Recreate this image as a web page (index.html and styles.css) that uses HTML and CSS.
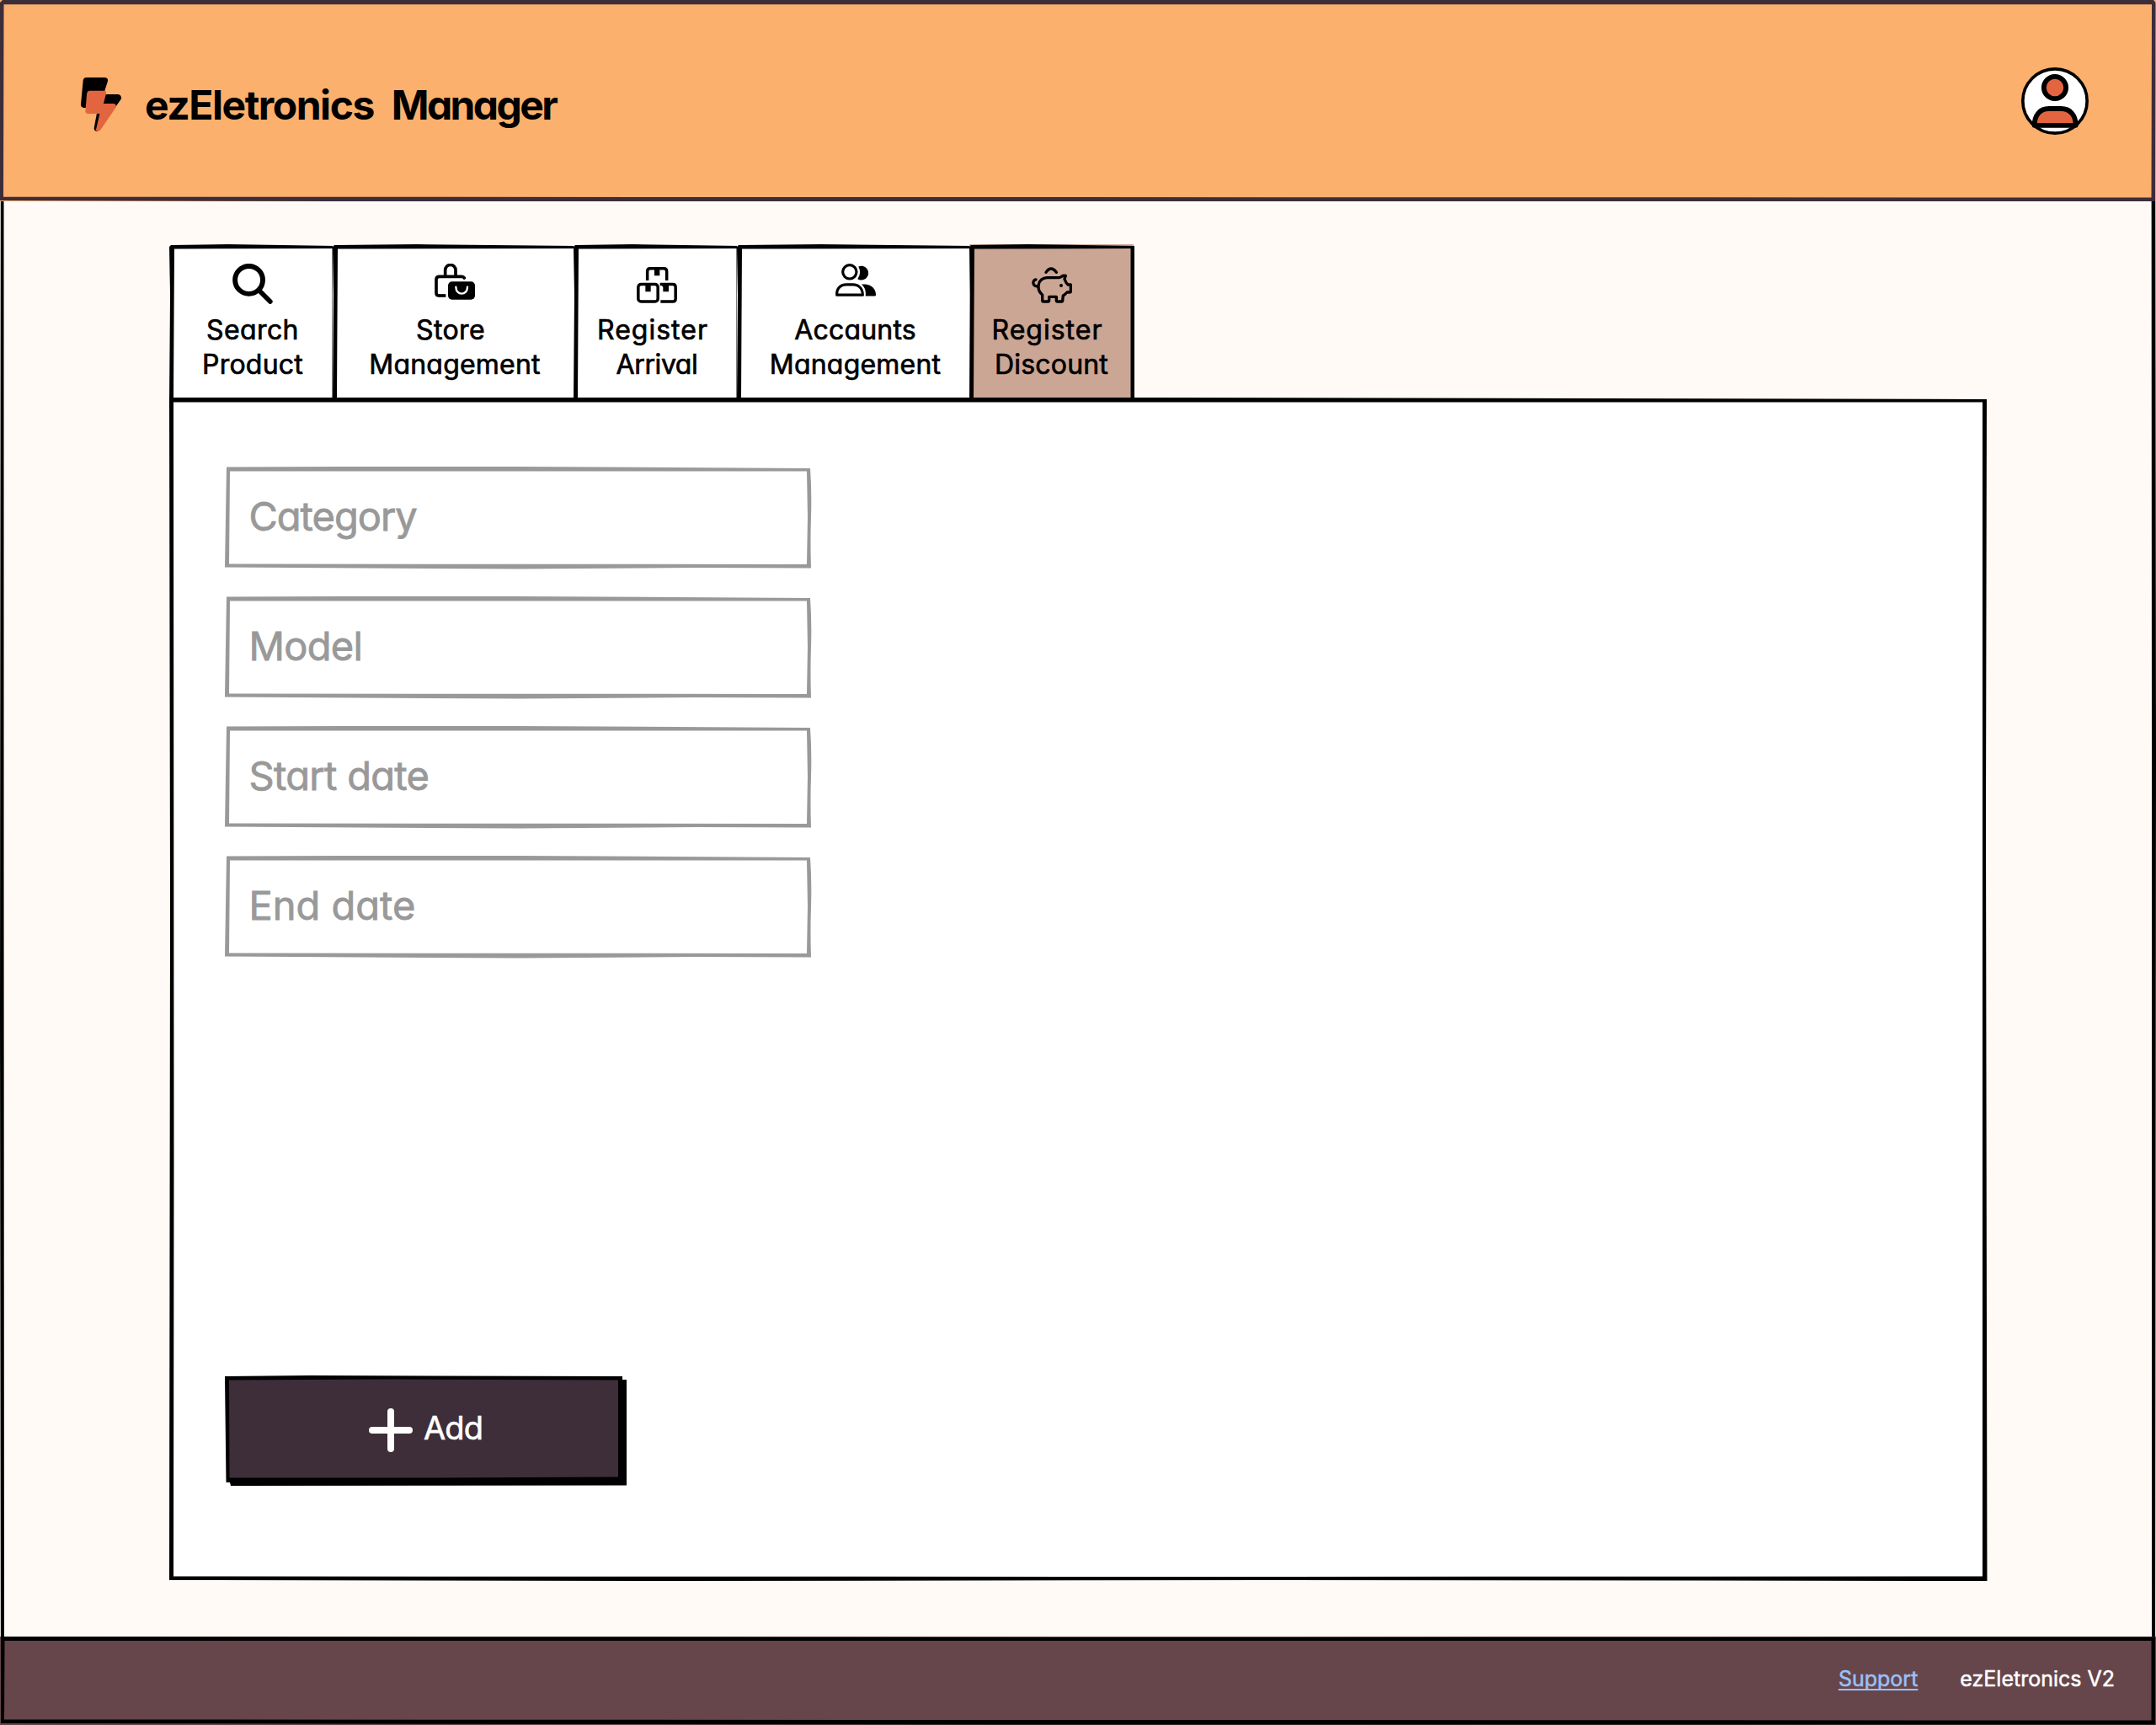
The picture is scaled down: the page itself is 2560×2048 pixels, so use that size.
FILE: index.html
```html
<!DOCTYPE html>
<html lang="en">
<head>
<meta charset="utf-8">
<title>ezEletronics Manager</title>
<link rel="stylesheet" href="styles.css">
</head>
<body>
<div class="page">
  <svg class="frame" viewBox="0 0 2560 2048" preserveAspectRatio="none"><path fill-rule="evenodd" d="M1 3H2559L2560 900 2559 2047H1L0 1200ZM4.5 6V1000L5 2042H2555V900L2554.500 6Z"/></svg>

  <header class="header">
    <svg class="frame frame--plum" viewBox="0 0 2560 239" preserveAspectRatio="none"><path fill-rule="evenodd" d="M3 0H2557L2559.500 3 2559 239H400L0 238V3ZM4.500 5.300 4 233.700 2554.500 234.500 2555 5.300Z"/></svg>
    <div class="brand">
      <svg class="brand__logo" viewBox="216 276 107 192" preserveAspectRatio="none">
        <path d="M230 276H280Q289 278 287 290L276 336H315Q324 339 323 352L266 462Q262 469 256 467Q250 463 251 455L261 384H223Q215 381 216 372L222 286Q224 276 230 276Z"/>
        <path fill="#e36540" d="M238 323H279Q284 325 283 332L276 369H304Q311 372 309 382L268 463Q263 470 257 465Q255 462 257 457L266 405H234Q227 403 228 396L232 332Q233 324 238 323Z"/>
      </svg>
      <h1 class="brand__name">ezEletronics <span class="brand__role">Manager</span></h1>
    </div>
    <svg class="avatar" viewBox="180 120 240 240">
      <circle cx="300" cy="240" r="114.500" fill="#fff" stroke="#000" stroke-width="11"/>
      <g fill="#e36540" stroke="#000" stroke-width="17.500" stroke-linejoin="round">
        <circle cx="300" cy="192" r="39.500"/>
        <path d="M227 326.500C227 290 247 267 278 267H322C354 267 374 290 374 326.500Z"/>
      </g>
    </svg>
  </header>

  <main class="main">
    <nav class="tabs">
      <a class="tab tab--narrow">
        <svg class="frame" viewBox="0 0 199 188" preserveAspectRatio="none"><path fill-rule="evenodd" d="M2 1 70 0 199 2V187L70 188 0 187 1 60 0 3ZM6 5.500 5.500 90 5 182 193.500 182V5Z"/></svg>
        <span class="tab__icon"><svg width="48" height="48" viewBox="258 101 145 146"><circle cx="317" cy="160" r="50" fill="none" stroke="#000" stroke-width="18"/><path d="M356 200 394 238" stroke="#000" stroke-width="17" stroke-linecap="round"/></svg></span>
        <span class="tab__line tab__line--loose">Search</span><span class="tab__line">Product</span>
      </a>
      <a class="tab tab--store">
        <svg class="frame" viewBox="0 0 292 188" preserveAspectRatio="none"><path fill-rule="evenodd" d="M2 1 100 0 292 2V187L90 188 0 187 1 60 0 3ZM6 5.500 5.500 90 5 182 286.500 182V5Z"/></svg>
        <span class="tab__icon"><svg width="48" height="43" viewBox="978 98 144 129"><g fill="none" stroke="#000" stroke-width="11"><path d="M1016 143V121a18 18 0 0 1 37 0V143"/><path stroke-linecap="round" d="M1084 149Q1081 144 1075 144H995Q984 144 984 154V202Q984 212 994 212"/><path d="M992 212H1018"/></g><rect x="1026" y="162" width="96" height="64" rx="14"/><path d="M1054 181C1054 213 1095 213 1095 181" fill="none" stroke="#fff" stroke-width="7" stroke-linecap="round"/></svg></span>
        <span class="tab__line tab__line--loose tab__line--trail">Store</span><span class="tab__line">Management</span>
      </a>
      <a class="tab tab--narrow">
        <svg class="frame" viewBox="0 0 199 188" preserveAspectRatio="none"><path fill-rule="evenodd" d="M2 1 70 0 199 2V187L70 188 0 187 1 60 0 3ZM6 5.500 5.500 90 5 182 193.500 182V5Z"/></svg>
        <span class="tab__icon tab__icon--low"><svg width="48" height="43" viewBox="258 110 144 129"><g fill="none" stroke="#000" stroke-width="10.500"><path d="M296 158V126Q296 115.500 306 115.500H355Q365 115.500 365 126V158"/><rect x="263.500" y="171.500" width="70" height="61.500" rx="10"/><path d="M341 171.500H387Q396.500 171.500 396.500 182V223Q396.500 233 387 233H343"/></g><path d="M321 115h19v26h-19zM289 171h19v27h-19zM346 171h26v27h-20v-15z"/></svg></span>
        <span class="tab__line tab__line--wide tab__line--trail">Register</span><span class="tab__line tab__line--tight">Arrival</span>
      </a>
      <a class="tab tab--accounts">
        <svg class="frame" viewBox="0 0 282 188" preserveAspectRatio="none"><path fill-rule="evenodd" d="M2 1 100 0 282 2V187L90 188 0 187 1 60 0 3ZM6 5.500 5.500 90 5 182 276.500 182V5Z"/></svg>
        <span class="tab__icon"><svg width="48" height="39" viewBox="966 98 144 116"><g fill="none" stroke="#000" stroke-width="9.500" stroke-linejoin="round"><circle cx="1016.500" cy="127" r="24.500"/><path d="M971 209V205C971 182 988 172 1004 172H1028C1048 172 1063 185 1063 209Z"/></g><path d="M1048 108A25 25 0 1 1 1045 152Q1060 131 1048 108ZM1059 171H1072C1096 172 1110 190 1110 206V209Q1110 213 1105 213H1073Q1077 188 1059 171Z"/></svg></span>
        <span class="tab__line">Accaunts</span><span class="tab__line">Management</span>
      </a>
      <a class="tab tab--narrow tab--active">
        <svg class="frame" viewBox="0 0 199 188" preserveAspectRatio="none"><path fill-rule="evenodd" d="M2 1 70 0 196 2V187L70 188 0 187 1 60 0 3ZM6 5.500 5.500 90 5 182 191.500 182V5Z"/></svg>
        <span class="tab__icon tab__icon--low"><svg width="48" height="43" viewBox="372 110 144 129"><g fill="none" stroke="#000" stroke-width="10" stroke-linecap="round" stroke-linejoin="round"><path d="M423 129Q441 103 460 129"/><path d="M387 155C374 156 373 179 394 179"/><path d="M426 148H468Q474 148 478 144Q484 140 493 141L489 153L495 166L501 173H511V197Q511 200 507 200H498Q491 208 484 212L482 230Q482 233 478 233H464Q460 233 460 229V216H434V229Q434 233 430 233H414Q410 233 410 229V209C389 192 390 152 426 148Z"/></g><circle cx="477" cy="176" r="6"/></svg></span>
        <span class="tab__line tab__line--wide tab__line--trail">Register</span><span class="tab__line">Discount</span>
      </a>
    </nav>

    <section class="panel">
      <svg class="frame" viewBox="0 0 2158 1404" preserveAspectRatio="none"><path fill-rule="evenodd" d="M0-1H1150L1700 0 2158 1 2157 500 2158.500 1404 1300 1403 600 1404 0 1403 1 600ZM5 4.500 5.500 900 5 1398.500 1100 1399 2153 1398.500V4.500Z"/></svg>
      <form class="form">
        <label class="field field--category"><svg class="frame frame--grey" viewBox="0 0 697 121" preserveAspectRatio="none"><path fill-rule="evenodd" d="M2 .5 140 0H345L695 2Q697 30 696 60T696 120.500L560 120 350 121.500 0 119.500ZM6 5.500 5 115.500 691 116 692 60 691 5.500Z"/></svg>Category</label>
        <label class="field field--tight"><svg class="frame frame--grey" viewBox="0 0 697 121" preserveAspectRatio="none"><path fill-rule="evenodd" d="M2 .5 140 0H345L695 2Q697 30 696 60T696 120.500L560 120 350 121.500 0 119.500ZM6 5.500 5 115.500 691 116 692 60 691 5.500Z"/></svg>Model</label>
        <label class="field field--tight"><svg class="frame frame--grey" viewBox="0 0 697 121" preserveAspectRatio="none"><path fill-rule="evenodd" d="M2 .5 140 0H345L695 2Q697 30 696 60T696 120.500L560 120 350 121.500 0 119.500ZM6 5.500 5 115.500 691 116 692 60 691 5.500Z"/></svg>Start date</label>
        <label class="field">
          <svg class="frame frame--grey" viewBox="0 0 697 121" preserveAspectRatio="none"><path fill-rule="evenodd" d="M2 .5 140 0H345L695 2Q697 30 696 60T696 120.500L560 120 350 121.500 0 119.500ZM6 5.500 5 115.500 691 116 692 60 691 5.500Z"/></svg>End date</label>
      </form>
      <div class="add">
        <svg class="frame" viewBox="0 0 477 131" preserveAspectRatio="none"><path d="M0 1 100 0 472 1V5H477V130.500L7 131 6 127H1.500Z"/><path fill="#3d2e39" d="M5 5.500 200 4.500 467 5.500V120.500L250 121.500H5.500Z"/></svg>
        <svg class="add__plus" width="52" height="52" viewBox="0 0 52 52"><path d="M26 4V48M4 26H48" stroke="#fff" stroke-width="8" stroke-linecap="round"/></svg>
        <span class="add__label">Add</span>
      </div>
    </section>
  </main>

  <footer class="footer">
    <svg class="frame" viewBox="0 0 2560 105" preserveAspectRatio="none"><path fill-rule="evenodd" d="M1 0 1300 1 2559 .5V104.500H1200L1 103ZM5.500 5 5 98.500 2554.500 99.500V5Z"/></svg>
    <a class="footer__link">Support</a>
    <span class="footer__version">ezEletronics V2</span>
  </footer>
</div>
</body>
</html>
```
FILE: styles.css
```css
* { box-sizing: border-box; margin: 0; }
body { font-family: Inter, "Liberation Sans", sans-serif; font-feature-settings: "cv11"; color: #000; }
.page { position: relative; width: 2560px; height: 2048px; background: #fffaf5; display: flex; flex-direction: column; overflow: hidden; }
.frame { position: absolute; inset: 0; width: 100%; height: 100%; overflow: visible; pointer-events: none; }
.frame--plum { fill: #3d2d3a; }
.frame--grey { fill: #999; }

.header { position: relative; height: 239px; flex: none; padding: 0 80px 0 96px; background: #fbb06d; display: flex; justify-content: space-between; }
.brand { display: flex; align-items: flex-start; gap: 28px; padding-top: 92px; }
.brand__logo { width: 48px; height: 64px; }
.brand__name { font-size: 48px; line-height: 66px; font-weight: 700; white-space: pre; letter-spacing: -1.450px; word-spacing: 11px; }
.brand__role { letter-spacing: -2.600px; }
.avatar { width: 80px; height: 80px; margin-top: 80px; }

.main { flex: 1; padding: 51px 0 0 201px; }
.tabs { display: flex; height: 183px; }
.tab { position: relative; height: 188px; padding: 23px 1px 0 0; margin-right: -5.500px; background: #fff; display: flex; flex-direction: column; align-items: center; font-size: 32px; line-height: 41px; letter-spacing: .2px; -webkit-text-stroke: .7px #000; }
.tab--narrow { width: 199px; }
.tab--store { width: 292px; }
.tab--accounts { width: 282px; padding-right: 0; }
.tab--active { padding-right: 4px; background: linear-gradient(90deg, #cca695 195px, transparent 0); }
.tab__icon { height: 58px; }
.tab__icon--low { padding-top: 4px; }
.tab__line--trail { padding-right: 10px; }
.tab__line--loose { letter-spacing: .4px; }
.tab__line--wide { letter-spacing: 1px; }
.tab__line--tight { letter-spacing: -.4px; }

.panel { position: relative; width: 2158px; height: 1404px; background: #fff; padding: 81px 0 0 65.500px; }
.form { display: flex; flex-direction: column; gap: 33px; }
.field { position: relative; width: 697px; height: 121px; padding: 0 29px; font-size: 47px; line-height: 117px; color: #999; -webkit-text-stroke: .8px #999; }
.field--category { letter-spacing: -1px; }
.field--tight { letter-spacing: -.7px; }
.add { position: relative; width: 477px; height: 131px; margin-top: 496px; padding: 39px 0 0 171.500px; display: flex; gap: 13px; color: #fff; }
.add__plus { position: relative; }
.add__label { position: relative; font-size: 38px; line-height: 46px; letter-spacing: -.9px; -webkit-text-stroke: .6px #fff; }

.footer { position: relative; height: 105px; flex: none; background: #66464b; padding: 0 49px; display: flex; justify-content: flex-end; gap: 50px; font-size: 25px; line-height: 100px; color: #fff; -webkit-text-stroke: .5px; }
.footer__link { color: #9ac0f8; text-decoration: underline 2px; text-underline-offset: 3px; text-decoration-skip-ink: none; }
```
